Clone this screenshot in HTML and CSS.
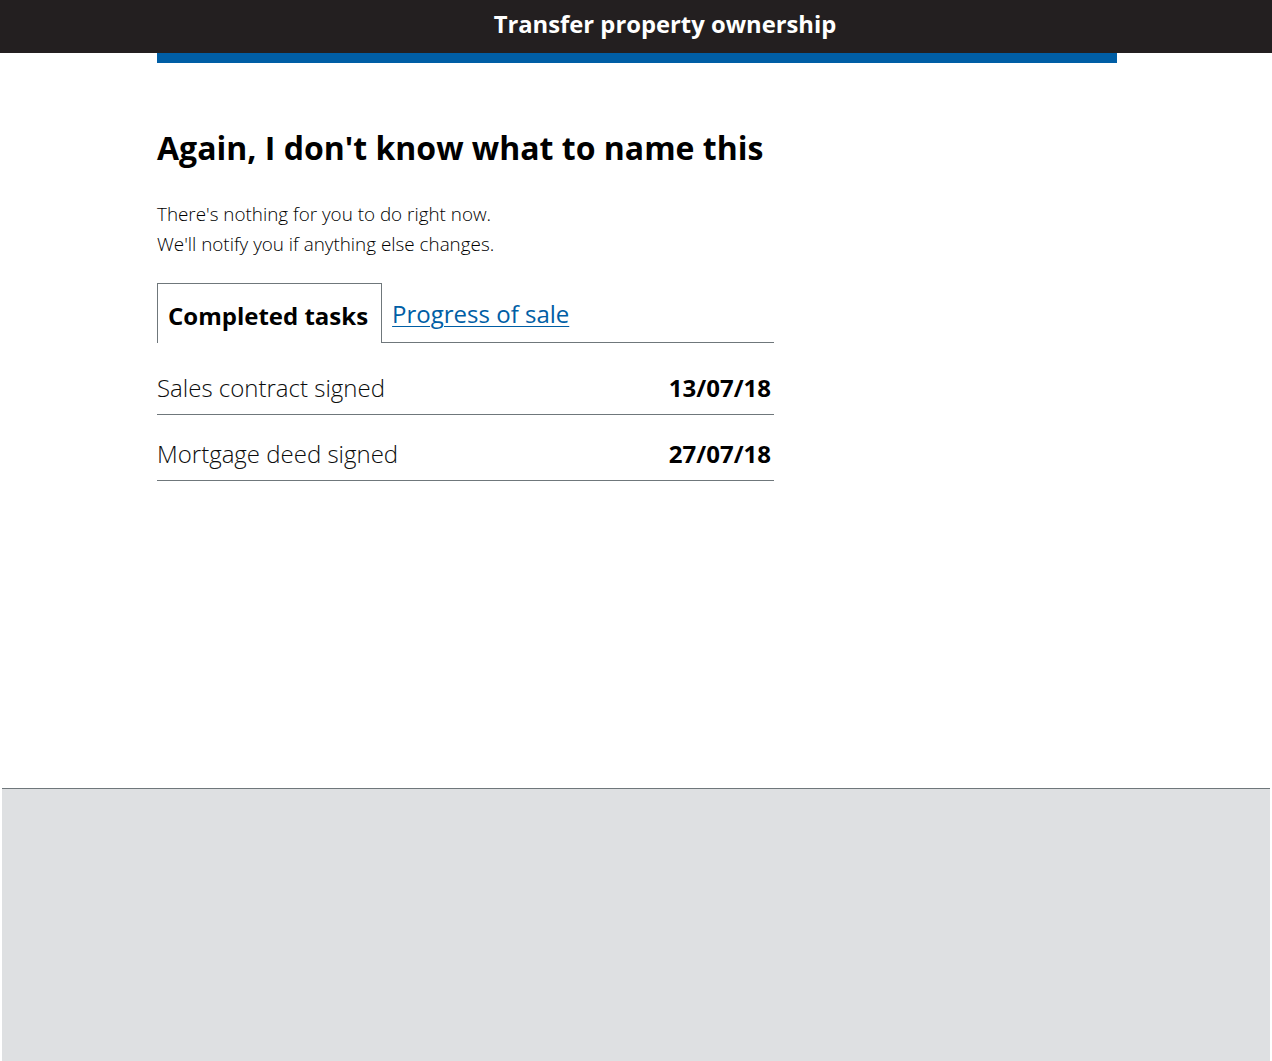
FILE: index.html
```html
<!DOCTYPE html>
<html lang="en">
<head>
<meta charset="utf-8">
<title>Transfer property ownership</title>
<link rel="stylesheet" href="styles.css">
</head>
<body>
<header class="site-header">
  <div class="site-title">Transfer property ownership</div>
</header>
<div class="width-container">
  <div class="phase-bar"></div>
  <main class="main">
    <h1 class="heading">Again, I don't know what to name this</h1>
    <p class="lede">There's nothing for you to do right now.<br>We'll notify you if anything else changes.</p>
    <div class="tabs">
      <ul class="tab-list">
        <li class="tab tab-selected">Completed tasks</li>
        <li class="tab"><a href="#" class="tab-link">Progress of sale</a></li>
      </ul>
      <div class="task-list">
        <div class="task-row"><span class="task-name">Sales contract signed</span><span class="task-date">13/07/18</span></div>
        <div class="task-row"><span class="task-name">Mortgage deed signed</span><span class="task-date">27/07/18</span></div>
      </div>
    </div>
  </main>
</div>
<footer class="site-footer"></footer>
</body>
</html>
```

FILE: styles.css
```css
html, body {
  margin: 0;
  padding: 0;
}
body {
  font-family: "Open Sans", "Liberation Sans", sans-serif;
  color: #0b0c0c;
  background: #fff;
  min-height: 1061px;
  display: flex;
  flex-direction: column;
}
.site-header {
  background: #231f20;
  height: 53px;
  display: flex;
  align-items: center;
  justify-content: center;
  padding-left: 56px;
}
.site-title {
  color: #fff;
  font-weight: 700;
  font-size: 23.8px;
  line-height: 1;
  margin-top: -3px;
  margin-left: 2px;
}
.width-container {
  width: 960px;
  margin-left: calc(50% - 479px);
  flex: 1;
}
.phase-bar {
  height: 10px;
  background: #005ea5;
}
.main {
  padding-top: 65px;
}
.heading {
  margin: 0;
  font-size: 32px;
  font-weight: 700;
  line-height: 40px;
  color: #000;
}
.lede {
  margin: 31px 0 0;
  font-size: 18.85px;
  font-weight: 300;
  line-height: 30px;
  color: #000;
}
.tabs {
  width: 617px;
  margin-top: 24px;
}
.tab-list {
  list-style: none;
  margin: 0;
  padding: 0;
  display: flex;
  align-items: flex-start;
  border-bottom: 1px solid #6f777b;
}
.tab {
  font-size: 24px;
  line-height: 30px;
  padding: 16px 10px 12px 10px;
}
.tab-selected {
  font-weight: 700;
  font-size: 24px;
  color: #000;
  background: #fff;
  border: 1px solid #6f777b;
  border-bottom: 0;
  margin-bottom: -1px;
  padding: 17px 13px 12px 10px;
}
.tab-link {
  color: #005ea5;
  text-decoration: underline;
  text-underline-offset: 3px;
  text-decoration-thickness: 1px;
}
.task-list {
  padding-top: 6px;
}
.task-row {
  display: flex;
  justify-content: space-between;
  align-items: center;
  padding: 23px 3px 10px 0;
  line-height: 32px;
  border-bottom: 1px solid #6f777b;
}
.task-name {
  font-size: 24px;
  font-weight: 300;
  color: #0b0c0c;
}
.task-date {
  font-size: 24px;
  font-weight: 700;
  color: #000;
}
.site-footer {
  margin: 0 2px;
  height: 272px;
  background: #dee0e2;
  border-top: 1px solid #6f777b;
}
```
